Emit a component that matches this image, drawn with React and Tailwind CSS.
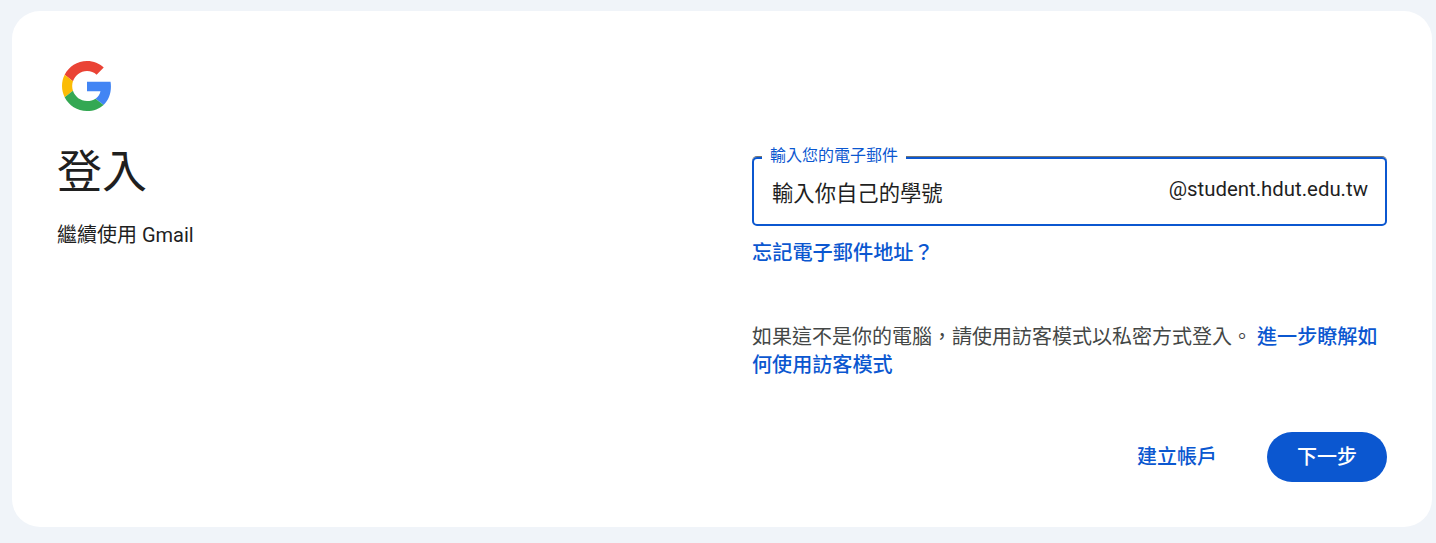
export default function App() {
  const cjk = { fontFamily: 'Roboto, "Noto Sans CJK TC", sans-serif' };
  return (
    <div className="w-[1436px] h-[543px] bg-[#f0f4f9] pt-[11px] pl-[12px] overflow-hidden" style={cjk}>
      <div className="w-[1420px] h-[516px] bg-white rounded-[28px] pl-[46px] pr-[45px] flex">
        <div className="w-[694px] shrink-0 flex flex-col items-start">
          <svg className="mt-[50px] ml-[4px] w-[50px] h-[50px]" viewBox="0 0 48 48">
            <path fill="#EA4335" d="M24 9.5c3.54 0 6.71 1.22 9.21 3.6l6.85-6.85C35.9 2.38 30.47 0 24 0 14.62 0 6.51 5.38 2.56 13.22l7.98 6.19C12.43 13.72 17.74 9.5 24 9.5z" />
            <path fill="#4285F4" d="M46.98 24.55c0-1.57-.15-3.09-.38-4.55H24v9.02h12.94c-.58 2.96-2.26 5.48-4.78 7.18l7.73 6c4.51-4.18 7.09-10.36 7.09-17.65z" />
            <path fill="#FBBC05" d="M10.53 28.59c-.48-1.45-.76-2.99-.76-4.59s.27-3.14.76-4.59l-7.98-6.19C.92 16.46 0 20.12 0 24c0 3.88.92 7.54 2.56 10.78l7.97-6.19z" />
            <path fill="#34A853" d="M24 48c6.48 0 11.93-2.13 15.89-5.81l-7.73-6c-2.15 1.45-4.92 2.3-8.16 2.3-6.26 0-11.57-4.22-13.47-9.91l-7.98 6.19C6.51 42.62 14.62 48 24 48z" />
          </svg>
          <h1 className="mt-[32px] -ml-[1px] text-[45px] leading-[60px] font-normal text-[#1f1f1f]">登入</h1>
          <p className="mt-[19px] -ml-[1px] text-[20px] leading-[26px] text-[#1f1f1f]">繼續使用 Gmail</p>
        </div>
        <div className="w-[635px] shrink-0 flex flex-col">
          <div className="relative mt-[146px] h-[69px] border-2 border-[#0b57d0] rounded-[5px] shadow-[0_-1px_0_#747775] flex items-center justify-between pl-[18px] pr-[17px]">
            <span className="absolute left-[8px] -top-[13px] bg-white px-[8px] text-[16px] leading-[20px] text-[#0b57d0]">輸入您的電子郵件</span>
            <span className="text-[21.33px] leading-[28px] mt-[5px] text-[#1f1f1f]">輸入你自己的學號</span>
            <span className="text-[20.4px] leading-[28px] -mt-[6px] text-[#1f1f1f]">@student.hdut.edu.tw</span>
          </div>
          <a className="mt-[13px] text-[20.2px] leading-[28px] font-medium text-[#0b57d0]">忘記電子郵件地址？</a>
          <p className="mt-[56px] text-[20px] leading-[28px] text-[#444746]">
            如果這不是你的電腦，請使用訪客模式以私密方式登入。 <a className="font-medium text-[20.1px] text-[#0b57d0]">進一步瞭解如何使用訪客模式</a>
          </p>
          <div className="mt-[53px] flex items-center justify-end">
            <a className="text-[20px] leading-[26px] font-medium text-[#0b57d0] mr-[50px]">建立帳戶</a>
            <button className="w-[120px] h-[50px] rounded-full bg-[#0b57d0] text-white text-[20px] font-medium">下一步</button>
          </div>
        </div>
      </div>
    </div>
  );
}
